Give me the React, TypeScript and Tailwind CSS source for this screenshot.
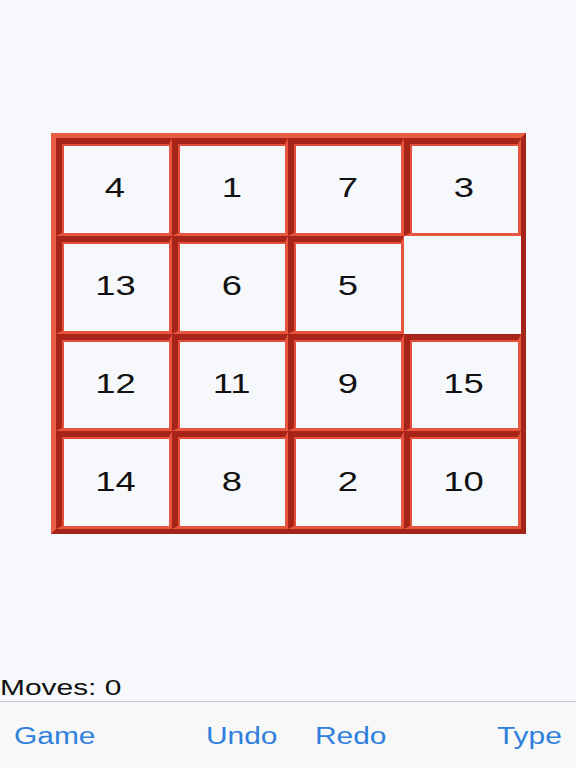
const board: (number | null)[] = [4, 1, 7, 3, 13, 6, 5, null, 12, 11, 9, 15, 14, 8, 2, 10];

function Tile({ value }: { value: number | null }) {
  if (value === null) return <div />;
  return (
    <div className="flex items-center justify-center border-t-[6px] border-l-[6px] border-r-[3px] border-b-[3px] border-t-[#a82318] border-l-[#a82318] border-r-[#e8553f] border-b-[#e8553f] bg-[#f7f8fc] shadow-[inset_2px_2px_0_#e4503b]">
      <span className="inline-block scale-x-[1.3] text-[28px] leading-none text-[#111]">{value}</span>
    </div>
  );
}

function ToolbarLabel({ label, className }: { label: string; className: string }) {
  return (
    <div className={className}>
      <span className="inline-block origin-left scale-x-[1.3] text-[23px] leading-none text-[#2f80dc]">{label}</span>
    </div>
  );
}

export default function App() {
  return (
    <div
      className="flex h-[768px] w-[576px] flex-col bg-[#f7f8fc]"
      style={{ fontFamily: '"Liberation Sans", Arial, sans-serif' }}
    >
      <div className="flex flex-1 justify-center pt-[133px]">
        <div className="grid h-[401px] w-[475px] grid-cols-4 grid-rows-4 border-[5px] border-t-[#ec5b45] border-l-[#ec5b45] border-r-[#a52318] border-b-[#a52318]">
          {board.map((v, i) => (
            <Tile key={i} value={v} />
          ))}
        </div>
      </div>

      <div className="h-[26px] pt-[2px]">
        <span className="inline-block origin-left scale-x-[1.36] text-[22px] leading-none text-[#111]">Moves: 0</span>
      </div>

      <div className="flex h-[67px] items-center border-t border-[#c6c6ca] bg-[#f8f8f9] pt-[6px]">
        <ToolbarLabel label="Game" className="ml-[14px] w-[80px]" />
        <ToolbarLabel label="Undo" className="ml-[112px] w-[109px]" />
        <ToolbarLabel label="Redo" className="w-[182px]" />
        <ToolbarLabel label="Type" className="" />
      </div>
    </div>
  );
}
